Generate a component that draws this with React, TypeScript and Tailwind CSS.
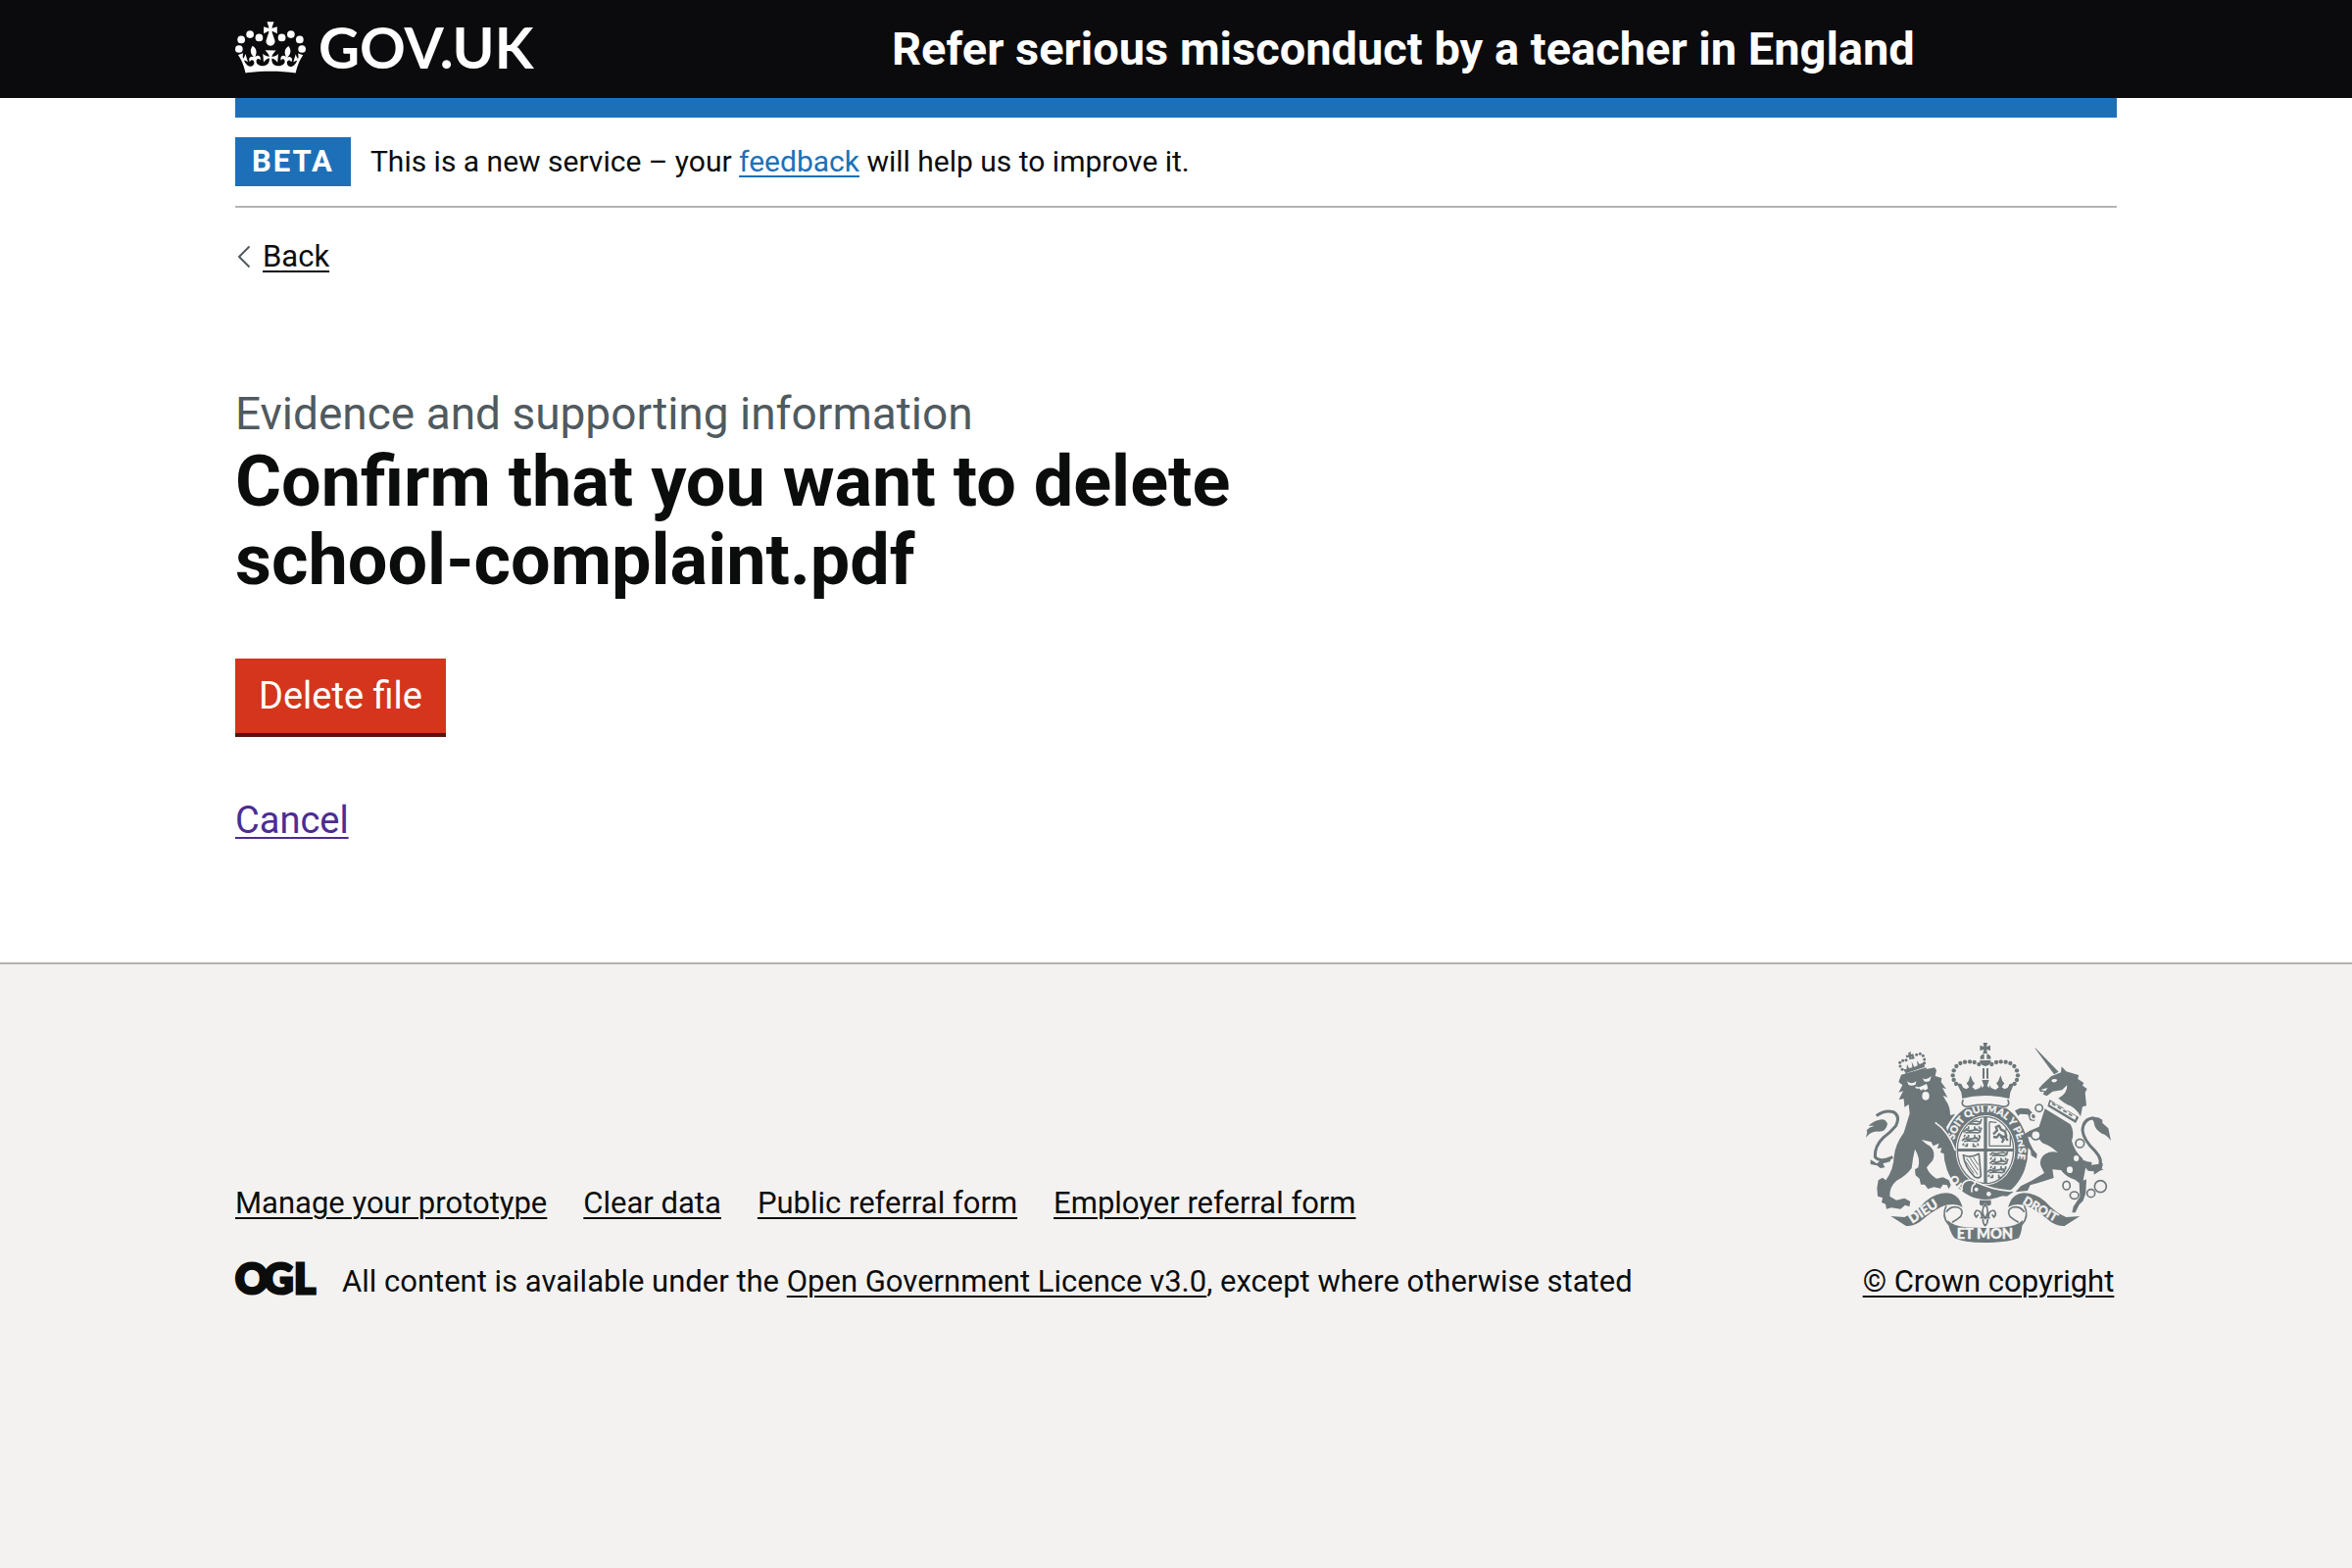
import React from 'react';

const crownBeads: [number, number][] = [
  [20.6, 25.4], [11.7, 22.2], [3.1, 27.3], [0.9, 36.5],
  [42.8, 25.4], [51.7, 22.2], [60.3, 27.3], [62.5, 36.5],
];

function Crown() {
  return (
    <svg viewBox="-2.8 9.8 69 50.5" className="h-[53px] w-[72px]" fill="currentColor" aria-hidden="true">
      {crownBeads.map(([x, y]) => (
        <circle key={`${x}-${y}`} cx={x} cy={y} r="3.7" />
      ))}
      <path
        transform="translate(0 9.8)"
        d="M33.1 9.8c.2-.1.3-.3.5-.5l4.6 2.4v-6.8l-4.6 1.5c-.1-.2-.3-.3-.5-.5l1.9-5.9h-6.7l1.9 5.9c-.2.1-.3.3-.5.5l-4.6-1.5v6.8l4.6-2.4c.1.2.3.3.5.5l-2.6 8c-.9 2.8 1.2 5.7 4.1 5.7 3 0 5.1-2.9 4.1-5.7z"
      />
      <path d="M37 37.9s-3.4 3.8-4.1 6.1c2.2 0 4.2-.5 6.4-2.8l-.7 8.5c-2-2.8-4.4-4.1-5.7-3.8.1 3.1.5 6.7 5.8 7.2 3.7.3 6.7-1.5 7-3.8.4-2.6-2-4.3-3.7-1.6-1.4-4.5 2.4-6.1 4.9-3.2-1.9-4.5-1.8-7.7 2.4-10.9 3 4 2.6 7.3-1.2 11.1 2.4-1.3 6.2 0 4 4.6-1.2-2.8-3.7-2.2-4.2.2-.3 1.7.7 3.7 3 4.2 1.9.3 4.7-.9 7-5.9-1.3 0-2.4.7-3.9 1.7l2.4-8c.6 2.3 1.4 3.7 2.2 4.5.6-1.6.5-2.8 0-5.3l5 1.8c-2.6 3.6-5.2 8.7-7.3 17.5-7.4-1.1-15.7-1.7-24.5-1.7s-17.1.6-24.5 1.7C5.2 50.9 2.6 45.9 0 42.3l5-1.8c-.5 2.5-.6 3.7 0 5.3.8-.8 1.6-2.3 2.2-4.5l2.4 8c-1.500-1-2.600-1.700-3.900-1.700 2.300 5 5.200 6.200 7 5.900 2.300-.4 3.300-2.400 3-4.200-.5-2.400-3-3.100-4.200-.2-2.200-4.600 1.600-6 4-4.600-3.700-3.700-4.200-7.100-1.200-11.100 4.200 3.200 4.300 6.400 2.400 10.900 2.500-2.800 6.300-1.300 4.900 3.200-1.800-2.700-4.100-1-3.700 1.600.3 2.300 3.300 4.100 7 3.800 5.400-.5 5.700-4.200 5.800-7.200-1.300-.2-3.700 1-5.700 3.800l-.7-8.500c2.200 2.300 4.200 2.700 6.400 2.800-.7-2.300-4.100-6.100-4.100-6.100z" />
    </svg>
  );
}

const stateCrownBeads: [number, number][] = [
  [418, 108], [404, 102], [390, 100], [375, 101], [361, 105], [349, 114], [341, 127], [338, 142], [341, 156], [348, 168],
];

const lionCrownBeads: [number, number][] = [
  [183, 124], [177, 114], [176, 103], [185, 97], [195, 95], [216, 88], [227, 79], [238, 76], [247, 82], [251, 93], [251, 104],
];

const LIONS = 'M-28-10l8-7 10 3 22-4 12 4 4-10M-22-8l18-2 20 2 10-4M-26 4l4-6M-12 6l0-8M8 6l-2-8M22 6l-2-8M-20 6h10M4 7h12';

function RoyalArms() {
  const paper = '#f3f2f1';
  return (
    <svg viewBox="72 42 750 612" className="h-[204px] w-[250px]" fill="#6d777a" stroke="none" aria-hidden="true">
      <defs>
        <path id="motto-start" d="M379 486A102 118 0 0 1 337 395" />
        <path id="motto-main" d="M342 340A100 115 0 1 1 485 471" />
        <clipPath id="field"><ellipse cx="438" cy="371" rx="86" ry="102" /></clipPath>
      </defs>

      {/* garter and quartered shield */}
      <ellipse cx="439" cy="373" rx="129" ry="149" />
      <ellipse cx="438" cy="371" rx="91" ry="107" fill={paper} />
      <ellipse cx="438" cy="371" rx="86" ry="102" fill="none" stroke="#6d777a" strokeWidth="4" />
      <g clipPath="url(#field)">
        <path d="M433 268h10v210h-10zM350 366h178v9H350z" />
        <g fill="none" stroke="#6d777a" strokeWidth="5" strokeLinejoin="round">
          <path transform="translate(398 300)" d={LIONS} />
          <path transform="translate(398 326)" d={LIONS} />
          <path transform="translate(394 352)" d={LIONS} />
          <path transform="translate(479 396)" d={LIONS} />
          <path transform="translate(479 422)" d={LIONS} />
          <path transform="translate(472 448)" d={LIONS} />
          <path d="M450 284v74h64v-34M450 284l22 2" strokeWidth="4" />
          <path d="M462 322l12-12-4-10 10-4 6 12 12 6 4 14-12 2-10-8-8 10-10-2M484 328l10 10-6 10M498 328l8 14M500 308q14-8 8-20" strokeWidth="7" />
          <path d="M370 386q24 10 48-4l6 68q-6 10-20 2-30-30-34-66z" strokeWidth="5" />
          <path d="M380 396l34 50M390 394l26 38M400 392l16 24M376 404l26 38" strokeWidth="3" />
        </g>
      </g>
      <g fill={paper} stroke={paper} strokeWidth="1" fontFamily="Lato, sans-serif" fontWeight="900">
        <text fontSize="33"><textPath href="#motto-start">HO</textPath></text>
        <text fontSize="31"><textPath href="#motto-main">SOIT QUI MAL Y PENSE</textPath></text>
      </g>
      <path d="M366 480q10-20 32-16l10 6q50 24 116 28l-20 14q-70-4-108-24-4 14-18 14-14-6-12-22z" fill="#6d777a" />
      <path d="M404 466q50 26 112 30M366 492q-2-26 22-30 18 2 18 12-12 4-10 26" fill="none" stroke={paper} strokeWidth="5" />
      <circle cx="410" cy="491" r="6" fill={paper} />
      <circle cx="448" cy="505" r="7" fill={paper} />

      {/* state crown */}
      <path d="M431 42h13l-3 12 12-4v16l-12-3 3 12h-14l3-12-12 3V50l12 4z" />
      <path d="M434 76h8v16h12v-8q-4-6-12-8h-8q-8 2-12 8v8h12zM420 96h35q-2 16-17 18-16-2-18-18z" />
      <path d="M429 120h6v32h-6zM441 120h6v32h-6z" />
      {stateCrownBeads.map(([x, y]) => (
        <g key={`${x}-${y}`}>
          <circle cx={x} cy={y} r="6.5" />
          <circle cx={875 - x} cy={y} r="6.5" />
        </g>
      ))}
      <path d="M350 166l14 2 6 12 10 4 8-6-8-12 6-6 6-18 7 18 6 6-8 12 10 8 14-6 4-8 2 8 6-6-6-18h22l-6 18 6 6 2-8 4 8 14 6 10-8-8-12 6-6 7-18 6 18 6 6-8 12 8 6 10-4 6-12 14-2-12 28-4 26q-75-16-142 0l-4-26z" />
      <path d="M362 214q75-20 152 0 4 30-20 28-56-14-112 0-22 0-20-28z" fill={paper} />
      <path d="M370 216q-10 20 12 22 56-14 112 0 22-2 12-22" fill="none" stroke="#6d777a" strokeWidth="5" />

      {/* lion */}
      <path d="M172 162l8-22 16-4 86-18 6 8-4 18 20 6-2 12 16 22-12-4 16 30-14-7 8 15q14 18 14 46l15-4-17 24-10 16 6 22q16 38 22 72l-10 8-10-4 2-12-14 12-2-16-12-4 4-14-14 2 6-16-18 8-6-12-30-7q14 14 27 20 18 18 8 42l-19 23q6 20 30 34l20-4 18 9 6 15-6 12-6-12-12-2-8 12-20-4-18 6-10-14-12 0-4-18-12-10-2-18 10-6q8-28-10-56-7 28-10 58-20 26-46 38-22 18-21 48l20 12 25-6 18 10-3 16-13-5-14 12-28-4-15 4-3-15-12-5 3-14-15-5-2-25 4-24 13-8 10 8q24-34 25-73 4-38 30-73l18-58-3-28-13 8-2-25-15 2 13-26-14 4 12-22z" />
      <path d="M198 160q14 12 28 0l-2 10q-14 6-22 0zM246 150q10 10 26-6l-4 14q-10 6-18 2zM222 176l14 2 22-10 4 14-10 6-4-4-8 4-4-6-10 0z" fill={paper} />
      <ellipse cx="255" cy="205" rx="11" ry="13" fill={paper} />
      <path d="M284 286q40 26 62 86" fill="none" stroke={paper} strokeWidth="5" />
      <path d="M104 266q26-20 52-12 22 12 8 42-14 18-38 36-28 26-26 60 14 18 54 0" fill="none" stroke="#6d777a" strokeWidth="9" />
      <path d="M72 332l4-16-2-6q8-10 24-14l-18 0q16-14 28-16 22-10 30 10-4 24-26 24-22-4-40 18z" />
      <path d="M86 400l20 12 10-10 34-8-4 12-22 6 6 12-14 2-10-8-20-4z" />
      {lionCrownBeads.map(([x, y]) => (
        <circle key={`${x}-${y}`} cx={x} cy={y} r="4.5" />
      ))}
      <path d="M186 122l10 2 2-16 6 12 10-2-2-18 8 16 10-4-2-16 8 12 14-6 2 14-58 20zM202 72l8-2-1 8 8-2 2 8-8 0 2 8-8 2-1-8-8 2-2-8 8 0zM190 138l66-20 2 5-66 20z" />

      {/* unicorn */}
      <path d="M588 57l4 2 70 72-14 8z" />
      <path d="M601 183l10-12 28-26 30-12 2-18 14 15 38 11-2 12 18 12-4 8 14 10-6 12 4 40-12 3-6 30q-14-30-44-38l-24-18q28-14 27-40l-16 15-28 4-18 14-12-5 4-9-12 2z" />
      <path d="M640 156q10-6 18 0-4 10-16 6zM606 186l22-6-6 10z" fill={paper} />
      <path d="M634 216l90 54-10 18-86-52z" />
      <path d="M638 222l78 46-4 10-78-46zM650 228l8-18 8 24zM676 244l8-18 8 26z" fill={paper} />
      <path d="M642 228l68 42" stroke="#6d777a" strokeWidth="5" strokeDasharray="12 8" />
      <path d="M620 244l78 48q14 24 4 50 8 32 33 54l10 26-8 42 10-4-2 42-8 24-12 12-12 24-10 0 4-18 20-30-2-42-12-10q-28-8-44-30l-26-2 4 26-50 16-22 6-8 17-37 4 16-18 32-16 40-24-10-20q-8-24 12-38 22-12 40-4-26-24-48-30l-10-12-18-4-16-4 4 16 12 24 12 14-2 14-16-10-2-16-22-18-6-26 26-16 28-12z" />
      <path d="M528 250l16-8 26 2 22 24-4 14-14-2-6-18-24-2-6 6z" />
      <path d="M738 404q24 32 44 26 20-26-8-56-36-34-39-64 2-36 34-38" fill="none" stroke="#6d777a" strokeWidth="9" />
      <path d="M762 270q20-4 34 8l0 10 18 16 8 38q-14-20-28-22-22-12-24-34zM740 404l24 4-2 8 36-4-4 16 6 2-12 4-18 12 0-10-18-2-8-10z" />
      <g fill="none" stroke="#6d777a" strokeWidth="5">
        <circle cx="602" cy="242" r="11" fill={paper} />
        <ellipse cx="585" cy="267" rx="8" ry="9" stroke={paper} />
        <circle cx="727" cy="350" r="13" fill={paper} />
        <ellipse cx="686" cy="479" rx="11" ry="13" />
        <ellipse cx="710" cy="509" rx="13" ry="11" />
        <ellipse cx="761" cy="503" rx="12" ry="12" />
        <circle cx="790" cy="482" r="18" />
        <circle cx="592" cy="325" r="14" fill={paper} />
      </g>
      <ellipse cx="716" cy="396" rx="8" ry="9" fill={paper} />
      <ellipse cx="696" cy="431" rx="9" ry="10" fill={paper} />

      {/* ribbon */}
      <g id="ribbon-side">
        <path d="M148 573l42 3q34-14 64-48 30-26 66-26 30 2 42 28l6 15q-18-10-38-7-20 0-40 14-20 10-40 28-28 26-55 23z" />
        <path d="M318 541q-16 32 8 58M318 560q14-20 36-14 20 8 8 28-12 10-26 18" fill="none" stroke="#6d777a" strokeWidth="5" />
      </g>
      <use href="#ribbon-side" transform="translate(875 0) scale(-1 1)" />
      <path d="M322 585q20 20 58 22 58 4 116 0 38-4 56-22-2 36-12 55-34 14-103 14t-94-14q-16-20-21-55z" />
      <g fill={paper} stroke={paper} strokeWidth="1" fontFamily="Lato, sans-serif" fontWeight="900">
        <text fontSize="41" transform="translate(214 596) rotate(-33)">DIEU</text>
        <text fontSize="37" transform="translate(550 533) rotate(30)">DROIT</text>
        <text fontSize="44" x="350" y="643">ET MON</text>
      </g>

      {/* fleur-de-lis */}
      <path d="M420 524h35v14l-10 4-8-10-8 10-9-4z" />
      <path d="M437 536q-16 22 0 44 16-22 0-44zM428 578q-2-24-18-22-10 10 0 20l6-8M446 578q2-24 18-22 10 10 0 20l-6-8M422 578h30M430 582q0 14 7 20 8-6 8-20" fill="none" stroke="#6d777a" strokeWidth="5" />
    </svg>
  );
}

function OglLogo() {
  return (
    <svg viewBox="0 0 82 33" className="h-[33px] w-[82px] shrink-0 overflow-visible" role="img" aria-label="Open Government Licence">
      <text x="0 29 60" y="32" fill="#0b0c0c" stroke="#0b0c0c" strokeWidth="3" fontFamily="Lato, sans-serif" fontWeight="900" fontSize="42">OGL</text>
    </svg>
  );
}

const footerLinks = ['Manage your prototype', 'Clear data', 'Public referral form', 'Employer referral form'];

const link = 'underline decoration-2 underline-offset-4';
const container = 'mx-auto w-full max-w-[1920px]';

export default function App() {
  return (
    <div className="flex min-h-screen flex-col bg-white font-[Roboto,sans-serif] text-[#0b0c0c]">
      <header className="bg-[#0b0b0d] text-white">
        <div className={`${container} flex h-[100px] items-center`}>
          <a href="#" className="flex w-[670px] items-center gap-[13px] pb-1">
            <Crown />
            <span className="font-[Lato,sans-serif] text-[58px] leading-[60px] font-bold">GOV.UK</span>
          </a>
          <a href="#" className="text-[47px] leading-[60px] font-bold">
            Refer serious misconduct by a teacher in England
          </a>
        </div>
      </header>

      <div className={`${container} flex-1`}>
        <div className="h-5 bg-[#1d70b8]" />
        <div className="flex items-center gap-5 border-b-2 border-[#b3b3b3] py-5">
          <strong className="bg-[#1d70b8] px-[17px] text-[31px] leading-[50px] font-bold tracking-[2px] text-white">BETA</strong>
          <p className="text-[30px] leading-10">
            This is a new service – your{' '}
            <a href="#" className={`${link} text-[#1d70b8]`}>feedback</a> will help us to improve it.
          </p>
        </div>

        <a href="#" className="mt-[30px] flex w-fit items-center gap-3 text-[31px] leading-10">
          <svg viewBox="0 0 16 24" className="h-6 w-4" fill="none" stroke="#505a5f" strokeWidth="2" aria-hidden="true">
            <path d="M14.500 1.500L4 12l10.500 10.500" />
          </svg>
          <span className={link}>Back</span>
        </a>

        <main className="pt-[110px] pb-[119px]">
          <h1 className="max-w-[1260px] text-[72px] leading-[80px] font-bold">
            <span className="block text-[46px] leading-[60px] font-normal text-[#505a5f]">
              Evidence and supporting information
            </span>
            Confirm that you want to delete
            <br />
            school-complaint.pdf
          </h1>
          <button
            type="button"
            className="mt-[60px] block bg-[#d4351c] px-6 py-[13px] text-[38px] leading-[50px] text-white shadow-[0_4px_0_#55150b]"
          >
            Delete file
          </button>
          <p className="mt-16 text-[38px] leading-[50px]">
            <a href="#" className={`${link} text-[#4c2c92]`}>Cancel</a>
          </p>
        </main>
      </div>

      <footer className="border-t-2 border-[#b3b3b3] bg-[#f3f2f1] pt-20 pb-[272px] text-[31px] leading-10">
        <div className={`${container} flex items-end justify-between`}>
          <div>
            <ul className="flex gap-[37px]">
              {footerLinks.map((label) => (
                <li key={label}>
                  <a href="#" className={link}>{label}</a>
                </li>
              ))}
            </ul>
            <div className="mt-10 flex items-start gap-[27px]">
              <OglLogo />
              <p>
                All content is available under the{' '}
                <a href="#" className={link}>Open Government Licence v3.0</a>, except where otherwise stated
              </p>
            </div>
          </div>
          <a href="#" className="flex min-w-[262px] flex-col items-center gap-5">
            <RoyalArms />
            <span className={link}>© Crown copyright</span>
          </a>
        </div>
      </footer>
    </div>
  );
}
